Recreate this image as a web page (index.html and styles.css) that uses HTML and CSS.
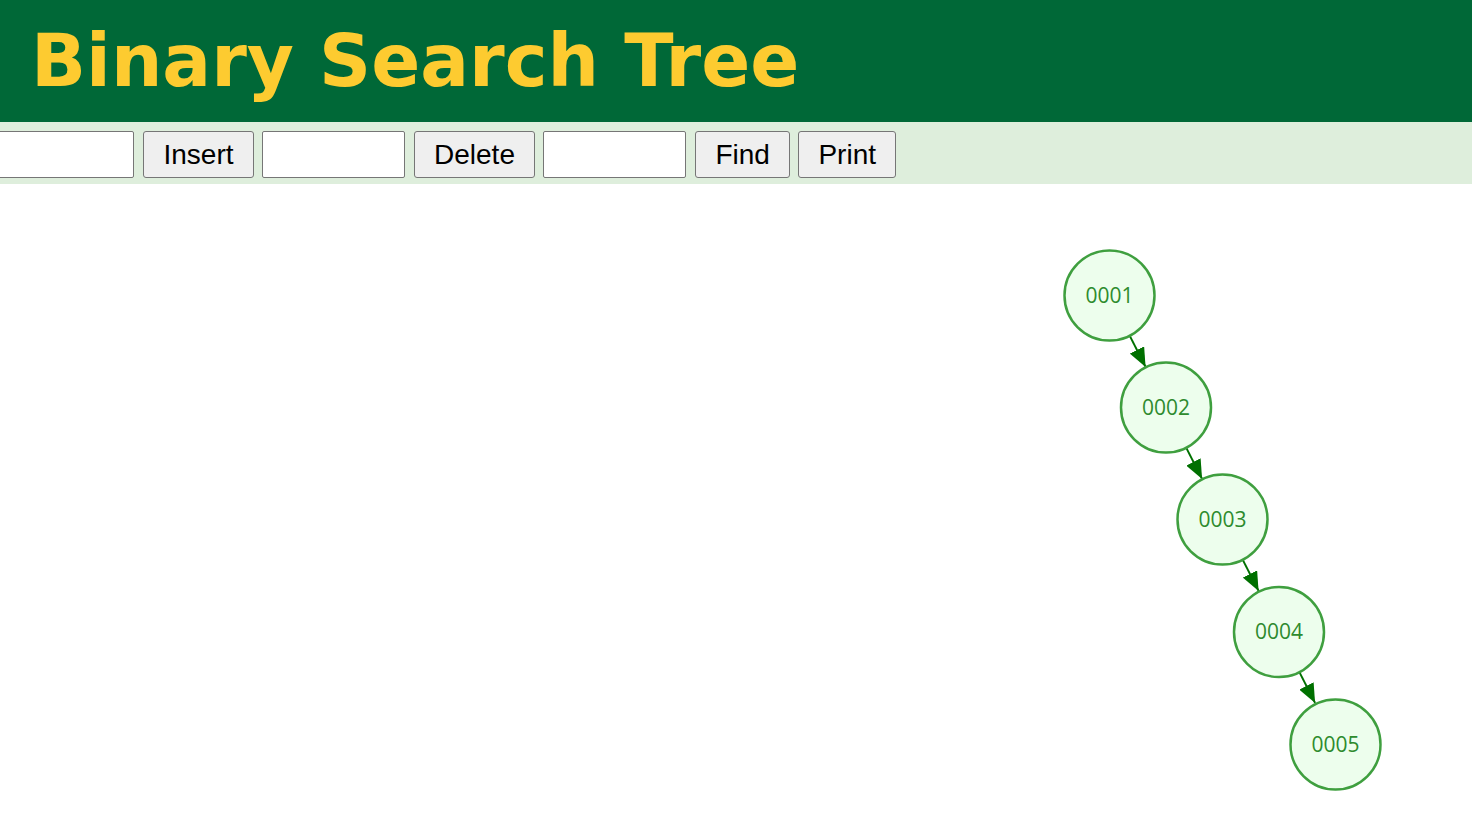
FILE: index.html
```html
<!DOCTYPE html>
<html>
<head>
<meta charset="utf-8">
<title>Binary Search Tree</title>
<link rel="stylesheet" href="styles.css">
</head>
<body>
<header class="header">
  <h1 class="title">Binary Search Tree</h1>
</header>
<div class="toolbar">
  <input class="field first" type="text">
  <button class="btn">Insert</button>
  <input class="field" type="text">
  <button class="btn">Delete</button>
  <input class="field" type="text">
  <button class="btn">Find</button>
  <button class="btn">Print</button>
</div>
<main class="canvas">
  <svg class="tree" viewBox="0 184 1472 641" width="1472" height="641" xmlns="http://www.w3.org/2000/svg">
    <defs>
      <marker id="arrow" viewBox="0 0 19 16" refX="19" refY="8" markerWidth="19" markerHeight="16" markerUnits="userSpaceOnUse" orient="auto">
        <path d="M0,0 L19,8 L0,16 Z" fill="#007000"/>
      </marker>
    </defs>
    <g class="edges">
      <line x1="1129.4" y1="335.1" x2="1145.6" y2="366.9" marker-end="url(#arrow)"/>
      <line x1="1185.9" y1="447.1" x2="1202.1" y2="478.9" marker-end="url(#arrow)"/>
      <line x1="1242.4" y1="559.1" x2="1258.6" y2="590.9" marker-end="url(#arrow)"/>
      <line x1="1298.9" y1="671.1" x2="1315.1" y2="702.9" marker-end="url(#arrow)"/>
    </g>
    <g class="nodes">
      <circle cx="1109.5" cy="295.5" r="45"/>
      <text x="1109.5" y="294.5">0001</text>
      <circle cx="1166" cy="407.5" r="45"/>
      <text x="1166" y="406.5">0002</text>
      <circle cx="1222.5" cy="519.5" r="45"/>
      <text x="1222.5" y="518.5">0003</text>
      <circle cx="1279" cy="632" r="45"/>
      <text x="1279" y="631">0004</text>
      <circle cx="1335.5" cy="744.5" r="45"/>
      <text x="1335.5" y="743.5">0005</text>
    </g>
  </svg>
</main>
</body>
</html>
```
FILE: styles.css
```css
html, body {
  margin: 0;
  padding: 0;
  background: #ffffff;
  overflow: hidden;
}

body {
  font-family: "Liberation Sans", Arial, sans-serif;
}

.header {
  background: #006837;
  height: 122px;
}

.title {
  margin: 0;
  padding: 0 0 0 31px;
  font-family: "DejaVu Sans", Verdana, sans-serif;
  font-weight: bold;
  font-size: 72.3px;
  line-height: 122px;
  color: #fdcb30;
  white-space: nowrap;
}

.toolbar {
  background: #deeedc;
  height: 62px;
  box-sizing: border-box;
  padding: 9px 0 6px 0;
  display: flex;
  align-items: flex-start;
}

.field {
  box-sizing: border-box;
  width: 143px;
  height: 47px;
  margin: 0 9px 0 0;
  border: 1px solid #767676;
  border-radius: 2px;
  background: #ffffff;
  font-size: 28px;
  padding: 0 4px;
}

.field.first {
  margin-left: -9px;
}

.btn {
  box-sizing: border-box;
  height: 47px;
  margin: 0 8px 0 0;
  padding: 0 19px 0 19.5px;
  border: 1px solid #767676;
  border-radius: 3px;
  background: #efefef;
  color: #000000;
  font-family: "Liberation Sans", Arial, sans-serif;
  font-size: 28px;
}

.canvas {
  height: 641px;
}

.tree {
  display: block;
}

.edges line {
  stroke: #007000;
  stroke-width: 2;
}

.nodes circle {
  fill: #edfeed;
  stroke: #3f9f3f;
  stroke-width: 2.5;
}

.nodes text {
  font-family: "Open Sans", sans-serif;
  font-size: 21px;
  fill: #2e8b2e;
  text-anchor: middle;
  dominant-baseline: central;
}
```
